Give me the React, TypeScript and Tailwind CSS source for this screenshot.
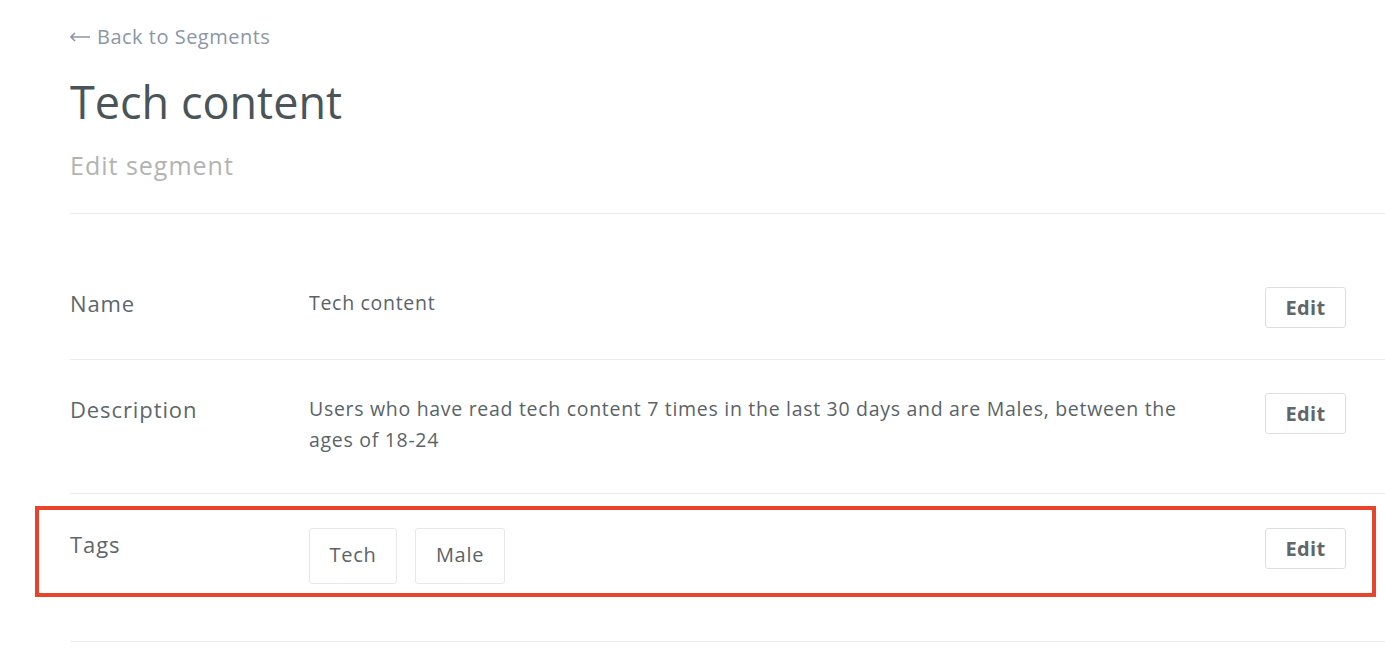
import React from 'react';

const font = { fontFamily: '"Open Sans", Lato, sans-serif' };

const EditButton: React.FC = () => (
  <button className="w-[81px] h-[41px] shrink-0 rounded-[3px] border border-[#dcdfe0] bg-white text-[20px] font-bold tracking-[0.4px] text-[#5f676a]">
    Edit
  </button>
);

const Row: React.FC<{ label: string; className: string; children: React.ReactNode }> = ({ label, className, children }) => (
  <div className={`relative flex items-start border-b border-[#ebebeb] pr-[39px] ${className}`}>
    <div className="w-[239px] shrink-0 mt-[1px] text-[22px] leading-[30px] tracking-[0.9px] text-[#5d676b]">{label}</div>
    <div className="flex-1 pr-[80px] text-[19.5px] leading-[31px] tracking-[0.7px] text-[#5a6367]">{children}</div>
    <EditButton />
  </div>
);

const App: React.FC = () => {
  return (
    <div className="min-h-[663px] bg-white overflow-hidden" style={font}>
      <div className="pl-[70px]">
        <a href="#" className="mt-[23px] flex items-center gap-[7px] text-[20px] leading-[28px] tracking-[0.5px] text-[#8b96a7]">
          <svg width="20" height="10" viewBox="0 0 20 10" fill="none" stroke="currentColor" strokeWidth="1.6">
            <path d="M1 5h19M5 1L1 5l4 4" />
          </svg>
          Back to Segments
        </a>
        <h1 className="mt-[24px] text-[45px] leading-[54px] text-[#4a5559]">Tech content</h1>
        <p className="mt-[19px] text-[25px] leading-[34px] tracking-[1px] text-[#b3b3b3]">Edit segment</p>
        <div className="mt-[31px] border-b border-[#ebebeb]" />

        <Row label="Name" className="pt-[73px] h-[146px]">
          Tech content
        </Row>
        <Row label="Description" className="pt-[33px] h-[134px]">
          Users who have read tech content 7 times in the last 30 days and are Males, between the ages of 18-24
        </Row>
        <Row label="Tags" className="pt-[34px] h-[148px]">
          <div className="flex gap-[18px]">
            <span className="flex h-[56px] w-[88px] items-center justify-center rounded-[3px] border border-[#e6e8e9] pb-[4px] text-[20px] tracking-[0.7px]">Tech</span>
            <span className="flex h-[56px] w-[90px] items-center justify-center rounded-[3px] border border-[#e6e8e9] pb-[4px] text-[20px] tracking-[0.7px]">Male</span>
          </div>
          <div className="absolute left-[-35px] top-[12px] h-[91px] w-[1341px] border-[4px] border-[#e8432b] pointer-events-none" />
        </Row>
      </div>
    </div>
  );
};

export default App;
